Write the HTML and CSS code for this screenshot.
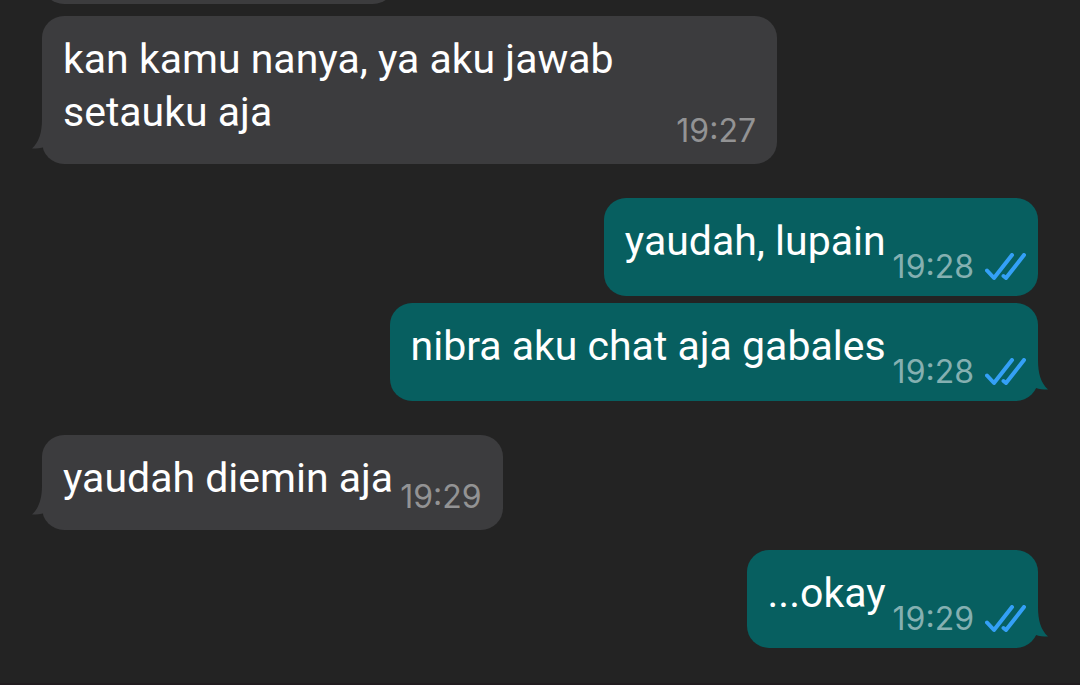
FILE: index.html
```html
<!DOCTYPE html>
<html lang="id">
<head>
    <meta charset="UTF-8">
    <meta name="viewport" content="width=device-width, initial-scale=1.0">
    <title>Chat</title>
    <link rel="stylesheet" href="styles.css">
</head>
<body>
    <svg class="sprite" aria-hidden="true">
        <symbol id="ticks" viewBox="0 0 41 28">
            <path d="M2 17.500 L9 25 L27 2" />
            <path d="M18.500 23 L21 25 L39 2" />
        </symbol>
        <symbol id="tail" viewBox="0 0 14 36">
            <path d="M0 0 H4 C4 14 7 23 14 29.500 C9 29.500 5 29.500 2 28 L0 30 Z" />
        </symbol>
    </svg>

    <main class="chat">
        <div class="bubble incoming previous"></div>

        <div class="bubble incoming">
            <p class="text">kan kamu nanya, ya aku jawab setauku aja</p>
            <div class="meta"><time>19:27</time></div>
            <svg class="tail"><use href="#tail"/></svg>
        </div>

        <div class="bubble outgoing new-sender">
            <p class="text">yaudah, lupain</p>
            <div class="meta"><time>19:28</time><svg class="ticks"><use href="#ticks"/></svg></div>
        </div>

        <div class="bubble outgoing">
            <p class="text">nibra aku chat aja gabales</p>
            <div class="meta"><time>19:28</time><svg class="ticks"><use href="#ticks"/></svg></div>
            <svg class="tail"><use href="#tail"/></svg>
        </div>

        <div class="bubble incoming new-sender">
            <p class="text">yaudah diemin aja</p>
            <div class="meta"><time>19:29</time></div>
            <svg class="tail"><use href="#tail"/></svg>
        </div>

        <div class="bubble outgoing reply">
            <p class="text">...okay</p>
            <div class="meta"><time>19:29</time><svg class="ticks"><use href="#ticks"/></svg></div>
            <svg class="tail"><use href="#tail"/></svg>
        </div>
    </main>
</body>
</html>
```

FILE: styles.css
```css
* {
    margin: 0;
    padding: 0;
    box-sizing: border-box;
    font-family: Roboto, 'Liberation Sans', sans-serif;
}

body {
    background: #232323;
    min-height: 100vh;
    overflow: hidden;
}

.sprite {
    display: none;
}

.chat {
    display: flex;
    flex-direction: column;
    padding: 0 42px 35px;
    margin-top: -91px;
    border-bottom: 2px solid #211c1f;
}

.bubble {
    position: relative;
    display: flex;
    align-items: flex-end;
    gap: 7px;
    max-width: 735px;
    margin-top: 7px;
    border-radius: 22px;
}

.incoming {
    align-self: flex-start;
    padding: 17px 21px 25px;
    background: #3c3c3e;
    color: #3c3c3e;
}

.outgoing {
    align-self: flex-end;
    padding: 17px 12px 28px 21px;
    background: #075f60;
    color: #075f60;
}

/* older message, scrolled mostly out of view */
.previous {
    width: 353px;
    height: 95px;
    margin: 0 0 5px;
}

.new-sender {
    margin-top: 34px;
}

.reply {
    margin-top: 20px;
}

.text {
    color: #fff;
    font-size: 41px;
    line-height: 53px;
}

.meta {
    display: flex;
    align-items: center;
    gap: 11px;
    line-height: 34px;
}

.meta time {
    font-family: Inter, 'Liberation Sans', sans-serif;
    font-size: 32px;
}

.incoming .meta {
    margin-bottom: -9px;
    color: #939394;
}

.outgoing .meta {
    margin-bottom: -16px;
    color: #85b0b1;
}

.ticks {
    width: 41px;
    height: 28px;
    fill: none;
    stroke: #34a0f6;
    stroke-width: 4;
    stroke-linecap: round;
    stroke-linejoin: round;
}

.tail {
    position: absolute;
    right: -10px;
    bottom: 5px;
    width: 14px;
    height: 36px;
    fill: currentColor;
}

.incoming .tail {
    right: auto;
    left: -10px;
    bottom: 9px;
    transform: scaleX(-1);
}
```
